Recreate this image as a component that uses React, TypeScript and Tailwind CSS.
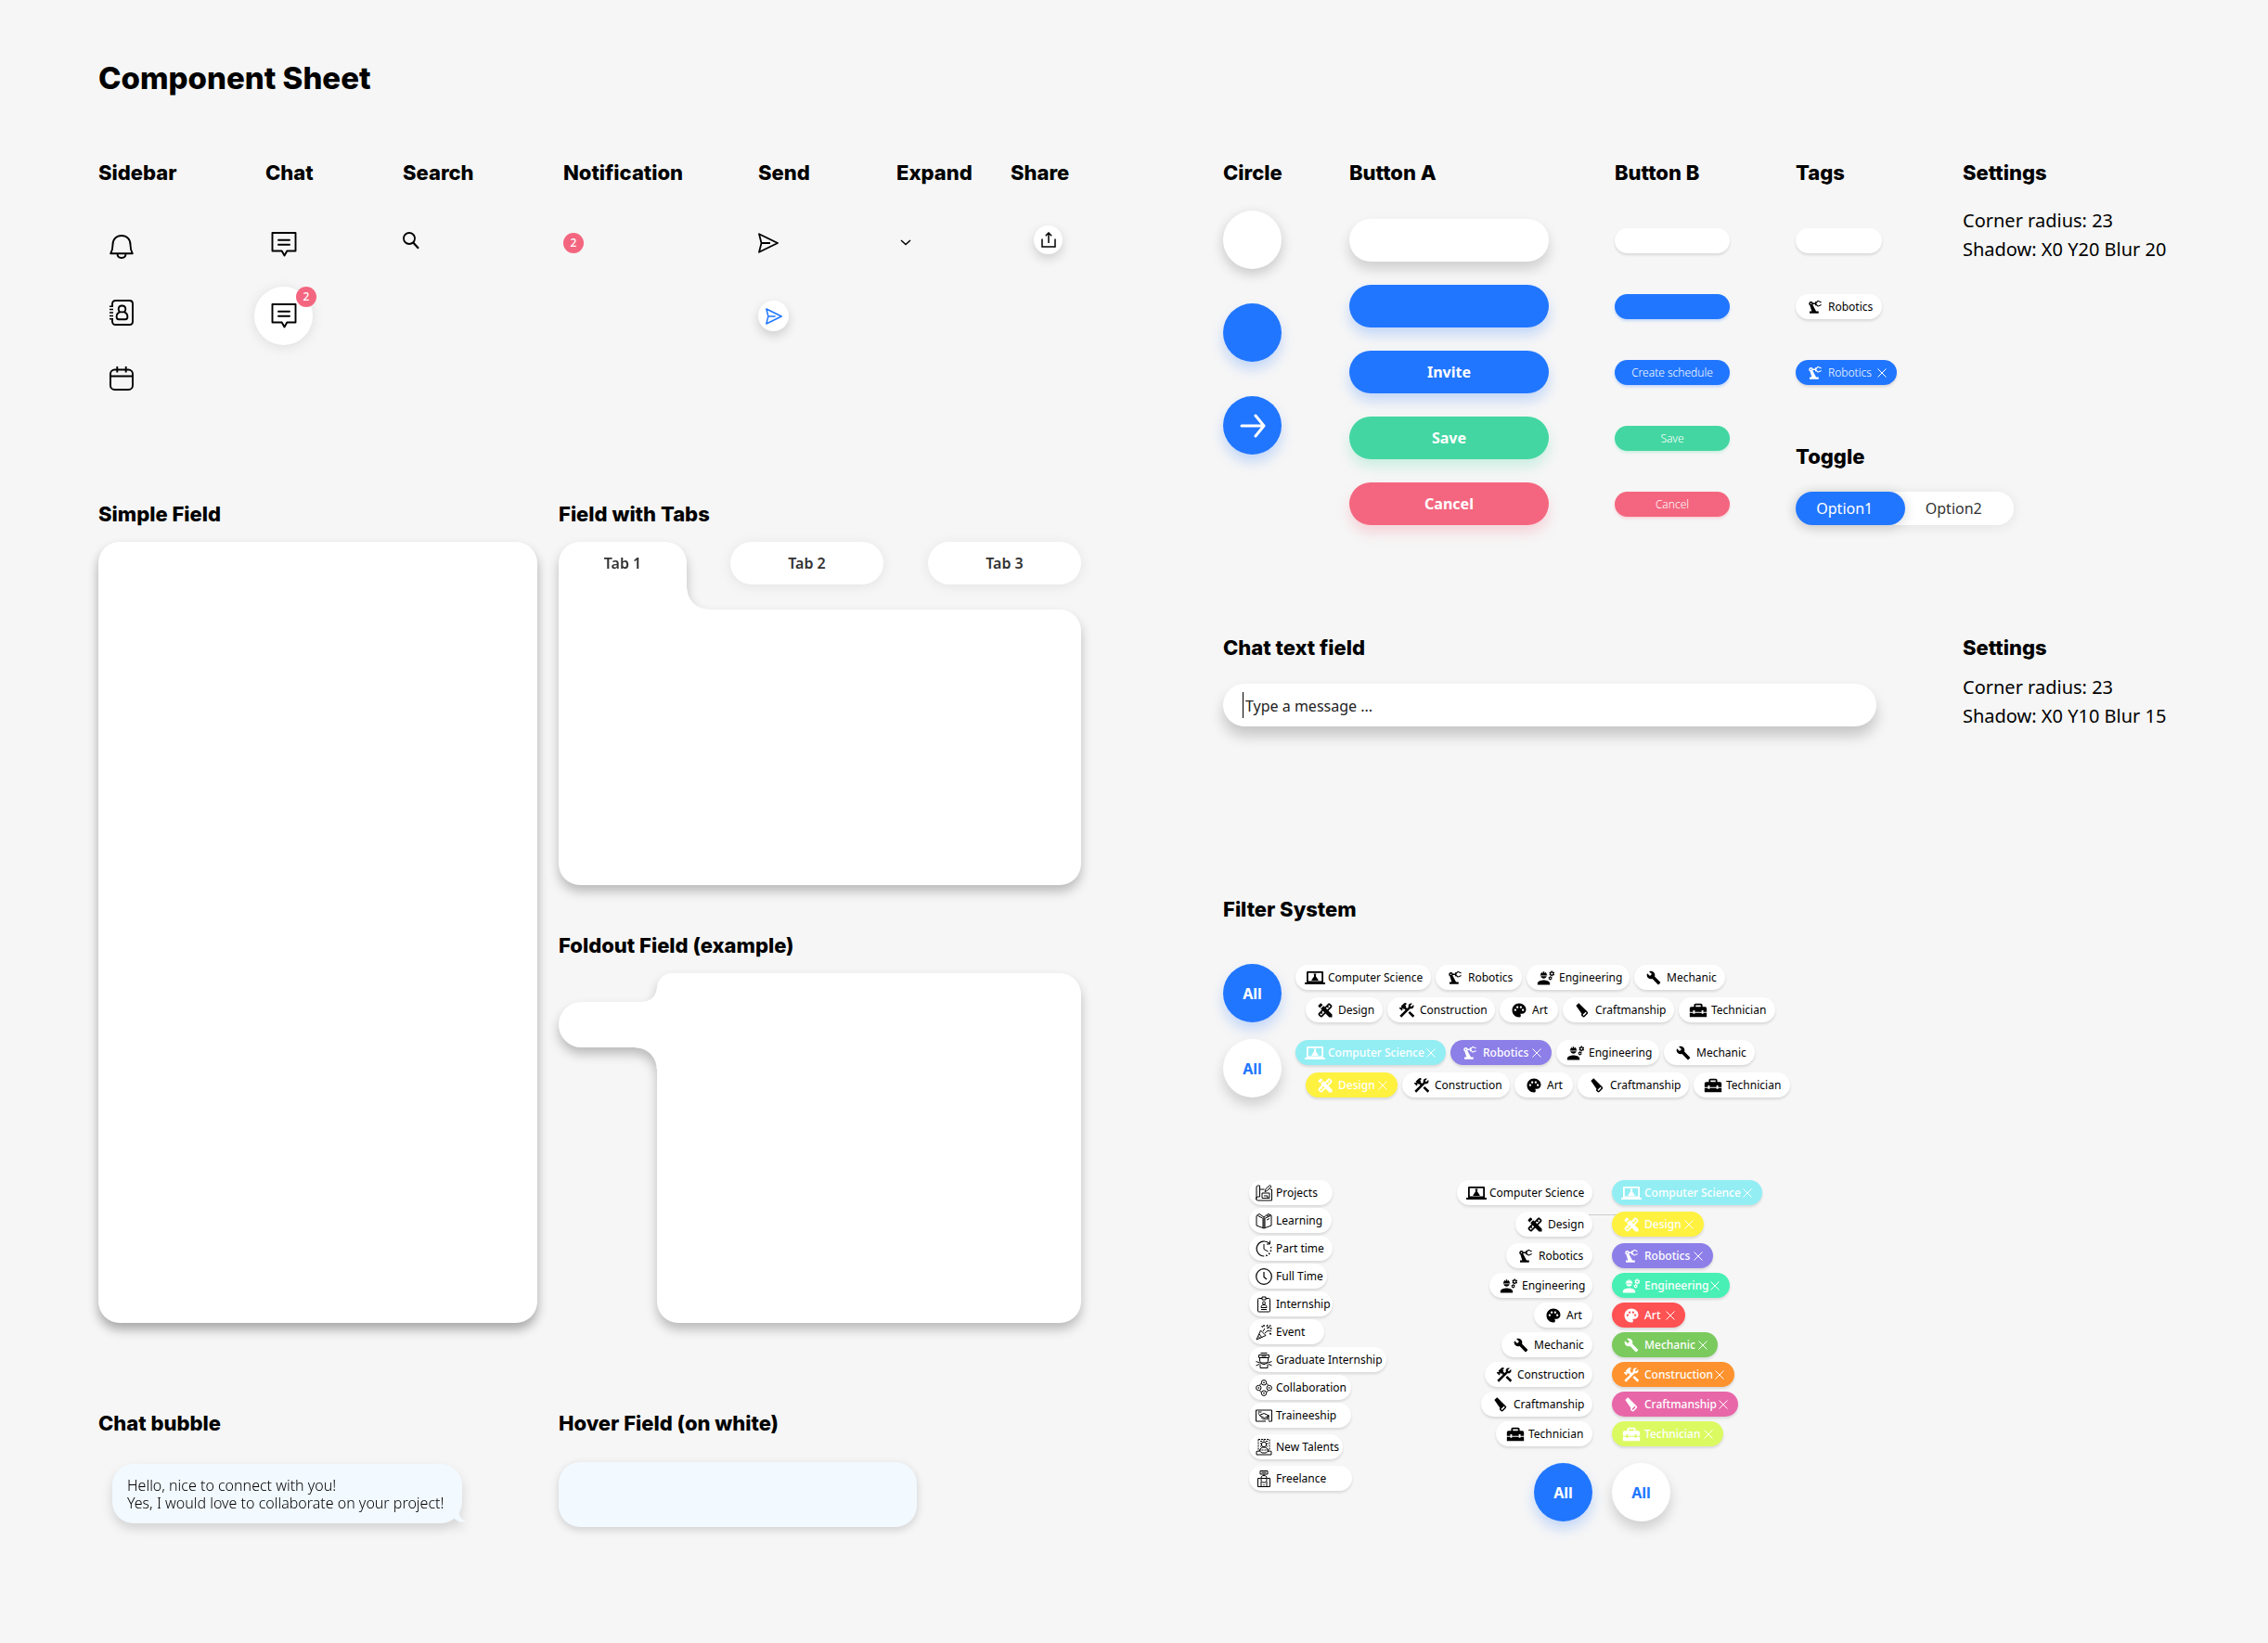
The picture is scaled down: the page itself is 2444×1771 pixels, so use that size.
import React from 'react';
import {
  MdBuild,
  MdCarpenter,
  MdConstruction,
  MdDesignServices,
  MdEngineering,
  MdHomeRepairService,
  MdPalette,
  MdPrecisionManufacturing,
} from 'react-icons/md';
import { clsx } from 'clsx';

type IconType = React.ComponentType<{ className?: string }>;

/* ---------- Icons ---------- */

const BellIcon = () => (
  <svg width="26" height="26" viewBox="0 0 26 26" fill="none" stroke="currentColor" strokeWidth="1.900" strokeLinejoin="round">
    <path d="M1.200 20.300c1.900-3 2.300-5 2.300-9.500C3.500 4.800 7.500 1 13 1s9.500 3.800 9.500 9.800c0 4.500.4 6.500 2.300 9.500z" />
    <path d="M8.500 20.500c0 2.800 2 4.500 4.500 4.500s4.500-1.700 4.500-4.500" />
  </svg>
);

const ContactsIcon = () => (
  <svg width="26" height="28" viewBox="0 0 26 28" fill="none" stroke="currentColor" strokeWidth="1.900" strokeLinejoin="round">
    <path d="M3 7V4.500C3 2.500 4.500 1 6.500 1h15c2 0 3.500 1.500 3.500 3.500v19c0 2-1.500 3.500-3.500 3.500h-15C4.500 27 3 25.500 3 23.500V21" />
    <path d="M0 7.200h4M0 10.600h4M0 14h4M0 17.400h4M0 20.800h4" strokeWidth="1.500" />
    <path d="M13.500 6.500c2.400 0 3.800 1.700 3.800 3.800 0 1.300-.5 2.300-1.300 3 2 .8 3.400 2.500 3.400 5.200 0 1.900-.7 2.700-2.300 2.700H9.900c-1.600 0-2.300-.8-2.300-2.700 0-2.700 1.400-4.400 3.400-5.200-.8-.7-1.300-1.700-1.300-3 0-2.100 1.400-3.800 3.800-3.800zM10.800 13.400h5.400" />
  </svg>
);

const CalendarIcon = () => (
  <svg width="26" height="26" viewBox="0 0 26 26" fill="none" stroke="currentColor" strokeWidth="1.900">
    <rect x="1" y="3.500" width="24" height="21.500" rx="4.500" />
    <path d="M1 10.500h24M8.300 0v6.500M17.700 0v6.500" />
  </svg>
);

const ChatIcon = () => (
  <svg width="28" height="27" viewBox="0 0 28 27" fill="none" stroke="currentColor" strokeWidth="1.900" strokeLinejoin="round">
    <path d="M1.500 1h25v19.500h-9.200L14.500 25.500l-2.800-5H1.500z" />
    <path d="M8 8.800h12M8 13.800h12" strokeLinecap="round" />
  </svg>
);

const SearchIcon = () => (
  <svg width="18" height="19" viewBox="0 0 18 19" fill="none" stroke="currentColor" strokeWidth="1.800">
    <circle cx="7" cy="7" r="6" />
    <path d="M11 11.200l6 6.500" strokeWidth="2.200" />
  </svg>
);

const SendIcon = ({ className }: { className?: string }) => (
  <svg className={className} viewBox="0 0 22 22" fill="none" stroke="currentColor" strokeWidth="1.800" strokeLinejoin="round">
    <path d="M1 1.200L21 11 1 20.800 3.500 11zM3.500 11h9.500" />
  </svg>
);

const ChevronIcon = () => (
  <svg width="12" height="7" viewBox="0 0 12 7" fill="none" stroke="currentColor" strokeWidth="1.500">
    <path d="M1 1l5 4.500L11 1" />
  </svg>
);

const ShareIcon = () => (
  <svg width="16" height="17" viewBox="0 0 16 17" fill="none" stroke="currentColor" strokeWidth="1.500">
    <path d="M1 7.500V16h14V7.500M8 12V1.500M4.800 4.300L8 1l3.200 3.300" />
  </svg>
);

const ArrowIcon = () => (
  <svg width="28" height="26" viewBox="0 0 28 26" fill="none" stroke="currentColor" strokeWidth="3" strokeLinecap="round" strokeLinejoin="round">
    <path d="M2 13h24M17 2l9 11-9 11" />
  </svg>
);

const LaptopFlaskIcon = ({ className }: { className?: string }) => (
  <svg className={className} viewBox="0 0 22 14" fill="currentColor">
    <path fillRule="evenodd" d="M3 0h16a1 1 0 0 1 1 1v11H2V1a1 1 0 0 1 1-1zm.8 1.700v8.800h14.400V1.700z" />
    <path d="M0 12h22v1.500a.5.500 0 0 1-.5.500H.5a.5.500 0 0 1-.5-.5zM9.500 2.500h3v.8H12V5.500l2.500 3.500c.3.500 0 1-.5 1H8c-.5 0-.8-.5-.5-1L10 5.500V3.300h-.5z" />
  </svg>
);

const CloseIcon = () => (
  <svg width="10" height="10" viewBox="0 0 10 10" fill="none" stroke="currentColor" strokeWidth="1">
    <path d="M.5.500l9 9M9.500.500l-9 9" />
  </svg>
);

const Line = ({ children }: { children: React.ReactNode }) => (
  <svg width="18" height="18" viewBox="0 0 18 18" fill="none" stroke="currentColor" strokeWidth="1" strokeLinejoin="round">
    {children}
  </svg>
);

const jobIcons: Record<string, React.ReactNode> = {
  projects: (
    <Line>
      <path d="M4.500 13V1h-2l-1.500 1v13.500M4.500 13H2.500a1.800 1.800 0 0 0 0 4h15V5h-2M4.500 5h5" />
      <path d="M10 7.500l1-3L15.500.500l1.500 1.500-4.500 4.500zM7 14.500V9h8v5.500zM9 12h4v2.500" />
    </Line>
  ),
  learning: (
    <Line>
      <path d="M9 5v12l-8-3V3.500L4 1.500 9 5M9 5l4.500-3.500L17 3v11l-8 3M8 6v10M10 6v10" />
      <path d="M2.500 3.500l5 2.500M10.500 6l5.500-2.500M12 4l3-1.500M12 8l3-1.500" />
    </Line>
  ),
  partTime: (
    <Line>
      <path d="M15 3.500A8 8 0 1 0 9 17" strokeWidth="1.200" />
      <path d="M16.500 7A8 8 0 0 1 9 17" strokeDasharray="1.500 2" strokeWidth="1.500" />
      <path d="M15.500.500v3.500h-3.500M9 4v5.500l4.500 2.500" />
    </Line>
  ),
  fullTime: (
    <Line>
      <circle cx="9" cy="9" r="8.300" strokeWidth="1.200" />
      <path d="M9 4v5.500l3 2.500" strokeWidth="1.200" />
    </Line>
  ),
  internship: (
    <Line>
      <path d="M7 1h4v3H7zM11 2.500h3.500c.6 0 1 .4 1 1v12.500c0 .6-.4 1-1 1h-11c-.6 0-1-.4-1-1V3.500c0-.6.400-1 1-1H7" />
      <circle cx="9" cy="7.500" r="1.500" />
      <path d="M6 12.500c0-2 1-3 3-3s3 1 3 3zM6 14.500h6" />
    </Line>
  ),
  event: (
    <Line>
      <path d="M1 17L5.500 7l5.500 5.500zM4 11l3 4M3 13.500l2 2M8 8l2-3M10 10l3-2.500c2-.5 2.500 1 4 0" />
      <path d="M9 1v2M6.500 2.500l1.500 1M12 3l1-2M15 1.500l1.500 1M12.500 5l2.500-2M15.500 5h2M15 10.500l2 .5" strokeWidth="1.400" />
    </Line>
  ),
  graduate: (
    <Line>
      <path d="M5.500 1.500h7M3.500 3.500h11v3h-11zM6.500 5h5M4.500 6.500V9c0 2.800 2 4.500 4.500 4.500s4.500-1.700 4.500-4.500V6.500" />
      <path d="M.5 10.500l4 1.500h9l4-1.500M.5 15l3.500-1.500M17.500 15L14 13.500M5 13.500v4h8v-4" />
    </Line>
  ),
  collaboration: (
    <Line>
      <circle cx="9" cy="3.300" r="2.700" />
      <circle cx="9" cy="14.700" r="2.700" />
      <circle cx="3.300" cy="9" r="2.700" />
      <circle cx="14.700" cy="9" r="2.700" />
      <path d="M4.500 6l2-2M13.500 6l-2-2M4.500 12l2 2M13.500 12l-2 2M8 3.300h2M8 14.700h2M3.300 8v2M14.700 8v2" />
    </Line>
  ),
  traineeship: (
    <Line>
      <path d="M14 15h3.500V3H.500v12H11M2.500 5h4M2.500 7h1.500" />
      <path d="M4 8.500L9 6.500l5.500 2.500-5 2.500zM6 10.500c1 2.500 4 3 7 1.500V9.500M14 9v5" />
    </Line>
  ),
  talents: (
    <Line>
      <path d="M3 .500h12V12H3zM5 2.500h2M11 2.500h2M9 .500v2M5 5h1.500M12 5h1.500M5 8h1M12 8h1" strokeDasharray="2 1" />
      <circle cx="9" cy="6" r="2.700" />
      <path d="M4.500 13c.500-3 2-4 4.500-4s4 1 4.500 4M1 13.500c3-1 4 0 6 1.500h4c2-1.500 4-2.500 6-1.500v3.500H1z" />
    </Line>
  ),
  freelance: (
    <Line>
      <path d="M5 .500h8v3.500H5zM6.500 2.200h5M9 4v2" />
      <path d="M6 10V8c0-1.500 1-2.500 3-2.500S12 6.500 12 8v2c0 2-1 3-3 3s-3-1-3-3zM6 8.500h6M5.500 8.500h-3v9h13v-9h-3M6 12v5.500M12 12v5.500M9 15v1.500" />
    </Line>
  ),
};

/* ---------- Data ---------- */

interface Tag {
  name: string;
  icon: IconType;
  iconSize: string;
  width: string;
  activeWidth: string;
  color: string;
}

const tags: Record<string, Tag> = {
  cs: { name: 'Computer Science', icon: LaptopFlaskIcon, iconSize: 'w-[22px] h-[14px]', width: 'w-[146px]', activeWidth: 'w-[162px]', color: 'bg-[#93eef4]' },
  design: { name: 'Design', icon: MdDesignServices, iconSize: 'size-5 -scale-x-100', width: 'w-[83px]', activeWidth: 'w-[99px]', color: 'bg-[#fff140]' },
  robotics: { name: 'Robotics', icon: MdPrecisionManufacturing, iconSize: 'size-[18px]', width: 'w-[93px]', activeWidth: 'w-[109px]', color: 'bg-[#8d7fe8]' },
  engineering: { name: 'Engineering', icon: MdEngineering, iconSize: 'size-5', width: 'w-[111px]', activeWidth: 'w-[127px]', color: 'bg-[#48f0b5]' },
  art: { name: 'Art', icon: MdPalette, iconSize: 'size-[18px]', width: 'w-[63px]', activeWidth: 'w-[79px]', color: 'bg-[#ff5252]' },
  mechanic: { name: 'Mechanic', icon: MdBuild, iconSize: 'size-4', width: 'w-[98px]', activeWidth: 'w-[114px]', color: 'bg-[#7aca5d]' },
  construction: { name: 'Construction', icon: MdConstruction, iconSize: 'size-5', width: 'w-[116px]', activeWidth: 'w-[132px]', color: 'bg-[#fe922e]' },
  craft: { name: 'Craftmanship', icon: MdCarpenter, iconSize: 'size-[18px]', width: 'w-[120px]', activeWidth: 'w-[136px]', color: 'bg-[#e867a9]' },
  technician: { name: 'Technician', icon: MdHomeRepairService, iconSize: 'size-[22px]', width: 'w-[104px]', activeWidth: 'w-[120px]', color: 'bg-[#dbfa62]' },
};

const tagOrder = ['cs', 'design', 'robotics', 'engineering', 'art', 'mechanic', 'construction', 'craft', 'technician'];

const jobs = [
  { name: 'Projects', icon: 'projects', width: 'w-[90px]' },
  { name: 'Learning', icon: 'learning', width: 'w-[89px]' },
  { name: 'Part time', icon: 'partTime', width: 'w-[90px]' },
  { name: 'Full Time', icon: 'fullTime', width: 'w-[84px]' },
  { name: 'Internship', icon: 'internship', width: 'w-[90px]' },
  { name: 'Event', icon: 'event', width: 'w-[81px]' },
  { name: 'Graduate Internship', icon: 'graduate', width: 'w-[148px]' },
  { name: 'Collaboration', icon: 'collaboration', width: 'w-[110px]' },
  { name: 'Traineeship', icon: 'traineeship', width: 'w-[110px]' },
  { name: 'New Talents', icon: 'talents', width: 'w-[101px] mt-1' },
  { name: 'Freelance', icon: 'freelance', width: 'w-[111px] mt-1' },
];

const buttons = [
  { label: '', name: 'White', style: 'bg-white', big: 'shadow-[0_8px_14px_rgba(0,0,0,0.16)]', small: 'shadow-[0_2px_3px_rgba(0,0,0,0.12)]' },
  { label: '', name: 'Blue', style: 'bg-[#2176ff]', big: 'shadow-[0_8px_14px_rgba(33,118,255,0.24)]', small: 'shadow-[0_2px_3px_rgba(33,118,255,0.24)]' },
  { label: 'Invite', smallLabel: 'Create schedule', style: 'bg-[#2176ff]', big: 'shadow-[0_8px_14px_rgba(33,118,255,0.24)]', small: 'shadow-[0_2px_3px_rgba(33,118,255,0.24)]' },
  { label: 'Save', style: 'bg-[#43d6a2]', big: 'shadow-[0_8px_14px_rgba(67,214,162,0.24)]', small: 'shadow-[0_2px_3px_rgba(67,214,162,0.24)]' },
  { label: 'Cancel', style: 'bg-[#f4667f]', big: 'shadow-[0_8px_14px_rgba(244,102,127,0.24)]', small: 'shadow-[0_2px_3px_rgba(244,102,127,0.24)]' },
];

/* ---------- Parts ---------- */

const Heading = ({ children, className }: { children: React.ReactNode; className?: string }) => (
  <h2 className={clsx("font-['Inter',sans-serif] font-extrabold text-[22px] leading-6 whitespace-nowrap", className)}>{children}</h2>
);

const Badge = ({ className }: { className?: string }) => (
  <span className={clsx('w-[22px] h-[22px] rounded-full bg-[#f4667f] text-white text-xs font-medium flex items-center justify-center', className)}>
    2
  </span>
);

const TagPill = ({ tag, active, color }: { tag: Tag; active?: boolean; color?: string }) => {
  const Icon = tag.icon;
  return (
    <button
      className={clsx(
        'h-[27px] rounded-full flex items-center pl-[10px] pr-[11px] text-xs whitespace-nowrap shrink-0 shadow-[0_2px_3px_rgba(0,0,0,0.12)]',
        active ? ['text-white', tag.activeWidth, color ?? tag.color, color ? 'font-light' : 'font-medium'] : ['bg-white', tag.width],
      )}
    >
      <span className="w-[22px] mr-[3px] flex justify-center shrink-0">
        <Icon className={clsx('shrink-0', tag.iconSize)} />
      </span>
      {tag.name}
      {active && (
        <span className="ml-auto">
          <CloseIcon />
        </span>
      )}
    </button>
  );
};

const AllCircle = ({ active }: { active?: boolean }) => (
  <button
    className={clsx(
      'size-[63px] rounded-full font-bold text-base shrink-0',
      active ? 'bg-[#2176ff] text-white shadow-[0_8px_14px_rgba(33,118,255,0.24)]' : 'bg-white text-[#2176ff] shadow-[0_8px_14px_rgba(0,0,0,0.16)]',
    )}
  >
    All
  </button>
);

const Settings = ({ shadow, className }: { shadow: string; className?: string }) => (
  <p className={clsx('text-[20px] leading-[31px] whitespace-nowrap', className)}>
    Corner radius: 23
    <br />
    Shadow: {shadow}
  </p>
);

const IconRow = () => (
  <div className="grid grid-cols-[168fr_160fr_173fr_210fr_149fr_123fr_76fr] items-start">
    <div>
      <Heading>Sidebar</Heading>
      <div className="mt-[55px] ml-3 flex flex-col gap-11">
        <BellIcon />
        <ContactsIcon />
        <CalendarIcon />
      </div>
    </div>
    <div>
      <Heading className="ml-3">Chat</Heading>
      <div className="mt-[52px] w-[63px]">
        <div className="ml-[18px]">
          <ChatIcon />
        </div>
        <button aria-label="Open chat" className="relative mt-8 size-[63px] rounded-full bg-white flex items-center justify-center shadow-[0_2px_14px_rgba(0,0,0,0.10)]">
          <ChatIcon />
          <Badge className="absolute top-0 -right-1" />
        </button>
      </div>
    </div>
    <div>
      <Heading>Search</Heading>
      <div className="mt-[52px]">
        <SearchIcon />
      </div>
    </div>
    <div>
      <Heading>Notification</Heading>
      <Badge className="mt-[53px]" />
    </div>
    <div>
      <Heading>Send</Heading>
      <SendIcon className="mt-[53px] size-[22px]" />
      <button aria-label="Send" className="mt-[51px] size-[33px] rounded-full bg-white text-[#2176ff] flex items-center justify-center shadow-[0_5px_12px_rgba(0,0,0,0.16)]">
        <SendIcon className="size-[18px]" />
      </button>
    </div>
    <div>
      <Heading>Expand</Heading>
      <div className="mt-[60px] ml-1">
        <ChevronIcon />
      </div>
    </div>
    <div>
      <Heading>Share</Heading>
      <button aria-label="Share" className="mt-[45px] ml-[25px] size-[31px] rounded-full bg-white flex items-center justify-center shadow-[0_5px_12px_rgba(0,0,0,0.16)]">
        <ShareIcon />
      </button>
    </div>
  </div>
);

const tabButton = 'text-base font-semibold text-[#333]';

const TabbedField = () => (
  <div className="grid mt-[18px]">
    <div className="[grid-area:1/1] drop-shadow-[0_7px_6px_rgba(0,0,0,0.24)]">
      <div className="flex items-end">
        <button className={clsx(tabButton, 'w-[138px] h-[73px] pb-[27px] bg-white rounded-t-[23px]')}>Tab 1</button>
        <div className="size-[23px] bg-[radial-gradient(circle_at_100%_0,transparent_22px,white_23px)]" />
      </div>
      <div className="h-[297px] bg-white rounded-b-[23px] rounded-tr-[23px]" />
    </div>
    <div className="[grid-area:1/1] self-start justify-self-end relative flex gap-12">
      <button className={clsx(tabButton, 'w-[165px] h-[46px] rounded-full bg-white shadow-[0_2px_14px_rgba(0,0,0,0.08)]')}>Tab 2</button>
      <button className={clsx(tabButton, 'w-[165px] h-[46px] rounded-full bg-white shadow-[0_2px_14px_rgba(0,0,0,0.08)]')}>Tab 3</button>
    </div>
  </div>
);

const FoldoutField = () => (
  <div className="mt-[18px] flex drop-shadow-[0_7px_6px_rgba(0,0,0,0.24)]">
    <div className="w-[106px] flex flex-col items-end">
      <div className="mt-4 size-[15px] bg-[radial-gradient(circle_at_0_0,transparent_14px,white_15px)]" />
      <div className="w-full h-[49px] bg-white rounded-l-full" />
      <div className="size-[23px] bg-[radial-gradient(circle_at_0_100%,transparent_22px,white_23px)]" />
    </div>
    <div className="flex-1 h-[377px] bg-white rounded-[23px] rounded-tl-2xl" />
  </div>
);

const ButtonSection = () => (
  <div className="grid grid-cols-[136fr_286fr_195fr_403fr] items-start">
    <div>
      <Heading>Circle</Heading>
      <div className="mt-[29px] flex flex-col gap-[37px]">
        <button aria-label="White circle" className="size-[63px] rounded-full bg-white shadow-[0_5px_14px_rgba(0,0,0,0.20)]" />
        <button aria-label="Blue circle" className="size-[63px] rounded-full bg-[#2176ff] shadow-[0_8px_14px_rgba(33,118,255,0.24)]" />
        <button aria-label="Next" className="size-[63px] rounded-full bg-[#2176ff] text-white flex items-center justify-center shadow-[0_8px_14px_rgba(33,118,255,0.24)]">
          <ArrowIcon />
        </button>
      </div>
    </div>
    <div>
      <Heading>Button A</Heading>
      <div className="mt-[38px] flex flex-col gap-[25px]">
        {buttons.map((b, i) => (
          <button key={i} aria-label={b.name} className={clsx('w-[215px] h-[46px] rounded-full text-white text-base font-bold', b.style, b.big)}>
            {b.label}
          </button>
        ))}
      </div>
    </div>
    <div>
      <Heading>Button B</Heading>
      <div className="mt-12 flex flex-col gap-11">
        {buttons.map((b, i) => (
          <button key={i} aria-label={b.name} className={clsx('w-[124px] h-[27px] rounded-full text-white text-xs font-light', b.style, b.small)}>
            {b.smallLabel ?? b.label}
          </button>
        ))}
      </div>
    </div>
    <div>
      <div className="grid grid-cols-[180fr_223fr]">
        <div>
          <Heading>Tags</Heading>
          <div className="mt-12 flex flex-col gap-11">
            <button aria-label="Empty tag" className="w-[93px] h-[27px] rounded-full bg-white shadow-[0_2px_3px_rgba(0,0,0,0.12)]" />
            <TagPill tag={tags.robotics} />
            <TagPill tag={tags.robotics} active color="bg-[#2176ff]" />
          </div>
        </div>
        <div>
          <Heading>Settings</Heading>
          <Settings shadow="X0 Y20 Blur 20" className="mt-6" />
        </div>
      </div>
      <Heading className="mt-[65px]">Toggle</Heading>
      <div className="mt-[26px] w-[235px] h-9 rounded-full bg-white flex shadow-[0_2px_14px_rgba(0,0,0,0.08)]">
        <button aria-pressed="true" className="flex-1 pr-3 rounded-full bg-[#2176ff] text-white text-base shadow-[0_2px_14px_rgba(0,0,0,0.16)]">
          Option1
        </button>
        <button aria-pressed="false" className="flex-1 pr-3 text-[#333] text-base">
          Option2
        </button>
      </div>
    </div>
  </div>
);

const FilterRows = ({ first, second, active }: { first: string[]; second: string[]; active: string[] }) => (
  <div className="flex gap-[15px]">
    <AllCircle active={active.length === 0} />
    <div className="flex flex-col gap-2 justify-end">
      <div className="flex gap-[5px]">
        {first.map((id) => (
          <TagPill key={id} tag={tags[id]} active={active.includes(id)} />
        ))}
      </div>
      <div className="flex gap-[5px] ml-[11px]">
        {second.map((id) => (
          <TagPill key={id} tag={tags[id]} active={active.includes(id)} />
        ))}
      </div>
    </div>
  </div>
);

const FilterSystem = () => {
  const first = ['cs', 'robotics', 'engineering', 'mechanic'];
  const second = ['design', 'construction', 'art', 'craft', 'technician'];

  return (
    <div className="mt-[181px]">
      <Heading>Filter System</Heading>
      <div className="mt-[47px] flex flex-col gap-[18px]">
        <FilterRows first={first} second={second} active={[]} />
        <FilterRows first={first} second={second} active={['cs', 'robotics', 'design']} />
      </div>

      <div className="mt-[89px] ml-7 flex items-start">
        <div className="w-[148px] flex flex-col gap-[3px]">
          {jobs.map((job) => (
            <button
              key={job.name}
              className={clsx('h-[27px] rounded-full bg-white flex items-center gap-1 pl-[7px] text-xs whitespace-nowrap shadow-[0_2px_3px_rgba(0,0,0,0.12)]', job.width)}
            >
              {jobIcons[job.icon]}
              {job.name}
            </button>
          ))}
        </div>

        <div className="ml-[76px] relative">
          <hr className="absolute left-[142px] top-[37px] w-[30px] border-t border-[#ccc]" />
          <div className="relative flex flex-col gap-[5px]">
            {tagOrder.map((id, i) => (
              <div key={id} className={clsx('grid grid-cols-[146px_162px] gap-[21px]', (i === 1 || i === 2) && 'mt-[2px]')}>
                <div className="flex justify-end">
                  <TagPill tag={tags[id]} />
                </div>
                <TagPill tag={tags[id]} active />
              </div>
            ))}
          </div>
          <div className="mt-[18px] grid grid-cols-[146px_162px] gap-[21px]">
            <div className="flex justify-end">
              <AllCircle active />
            </div>
            <AllCircle />
          </div>
        </div>
      </div>
    </div>
  );
};

const App: React.FC = () => {
  return (
    <main className="min-h-screen bg-[#f6f6f6] text-black font-['Noto_Sans',sans-serif] px-[106px] pt-[66px] pb-[125px]">
      <h1 className="font-['Inter',sans-serif] font-extrabold text-[33px] leading-9">Component Sheet</h1>

      <div className="mt-[72px] grid grid-cols-[1059fr_1020fr] gap-x-[153px] items-start">
        {/* Icons, fields and bubbles */}
        <div>
          <IconRow />

          <div className="mt-[121px] grid grid-cols-[473fr_563fr] gap-x-[23px]">
            <div className="flex flex-col">
              <Heading>Simple Field</Heading>
              <div className="mt-[18px] flex-1 rounded-[23px] bg-white shadow-[0_7px_12px_rgba(0,0,0,0.32)]" />
            </div>
            <div>
              <Heading>Field with Tabs</Heading>
              <TabbedField />
              <Heading className="mt-[53px]">Foldout Field (example)</Heading>
              <FoldoutField />
            </div>
          </div>

          <div className="mt-24 grid grid-cols-[473fr_563fr] gap-x-[23px]">
            <div>
              <Heading>Chat bubble</Heading>
              <div className="mt-8 ml-[15px] w-[377px] relative drop-shadow-[0_6px_6px_rgba(0,0,0,0.14)]">
                <p className="h-16 pt-[14px] pl-4 rounded-[23px] bg-[#f2f9ff] text-base font-light leading-[19px] whitespace-nowrap">
                  Hello, nice to connect with you!
                  <br />
                  Yes, I would love to collaborate on your project!
                </p>
                <svg className="absolute bottom-0 -right-1" width="18" height="18" viewBox="0 0 18 18" fill="#f2f9ff">
                  <path d="M11 4c-.5 6 1.500 10 7 11.500-4 1.500-7 1.500-10-1L0 10z" />
                </svg>
              </div>
            </div>
            <div>
              <Heading>Hover Field (on white)</Heading>
              <div className="mt-[30px] w-[386px] h-[70px] rounded-[23px] bg-[#f2f9ff] shadow-[0_3px_10px_rgba(0,0,0,0.16)]" />
            </div>
          </div>
        </div>

        {/* Buttons, text field and filters */}
        <div>
          <ButtonSection />

          <div className="mt-[120px] grid grid-cols-[797fr_223fr]">
            <div className="pr-[93px]">
              <Heading>
                <label htmlFor="message">Chat text field</label>
              </Heading>
              <div className="mt-[27px] h-[46px] rounded-full bg-white flex items-center pl-[21px] pr-6 shadow-[0_10px_15px_rgba(0,0,0,0.20)]">
                <span className="w-px h-7 bg-black" />
                <input id="message" type="text" placeholder="Type a message ..." className="flex-1 ml-[2px] pt-[2px] text-base text-black placeholder:text-[#222] outline-none" />
              </div>
            </div>
            <div>
              <Heading>Settings</Heading>
              <Settings shadow="X0 Y10 Blur 15" className="mt-[15px]" />
            </div>
          </div>

          <FilterSystem />
        </div>
      </div>
    </main>
  );
};

export default App;
